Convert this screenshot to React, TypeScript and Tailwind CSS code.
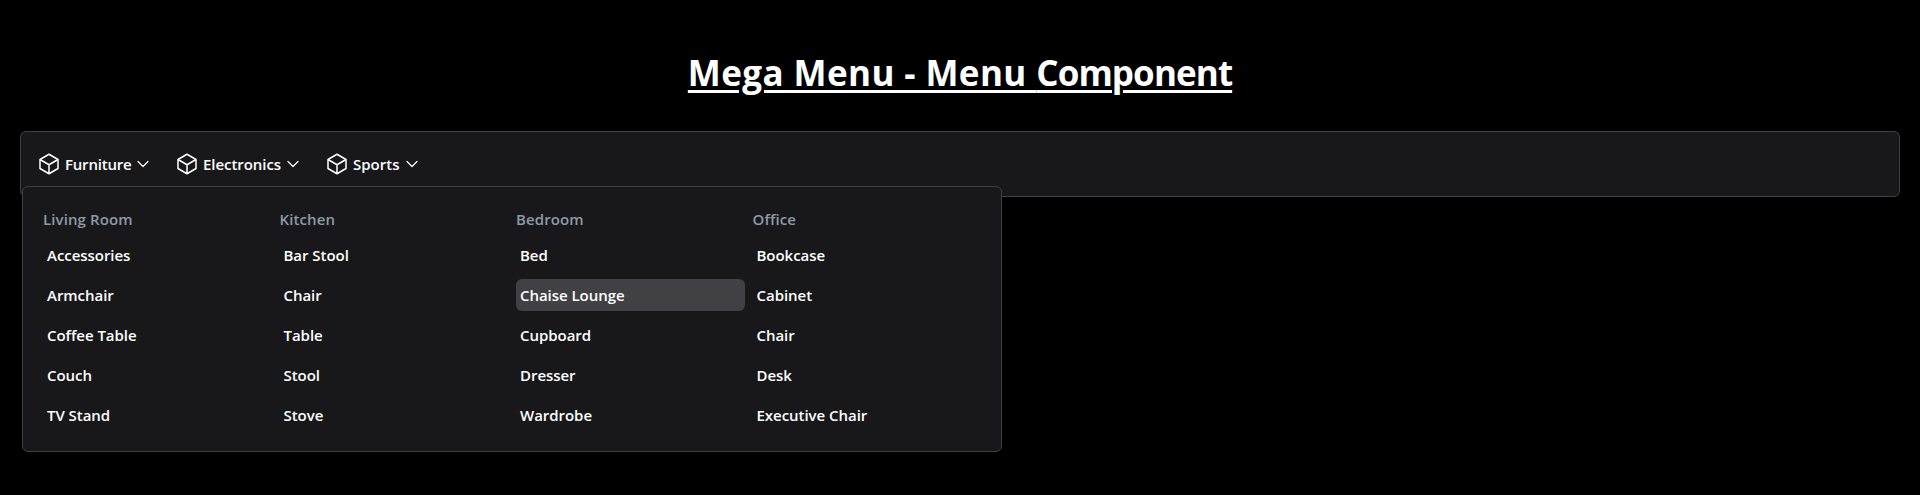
import React from "react";

type Column = { title: string; items: string[] };

const columns: Column[] = [
  { title: "Living Room", items: ["Accessories", "Armchair", "Coffee Table", "Couch", "TV Stand"] },
  { title: "Kitchen", items: ["Bar Stool", "Chair", "Table", "Stool", "Stove"] },
  { title: "Bedroom", items: ["Bed", "Chaise Lounge", "Cupboard", "Dresser", "Wardrobe"] },
  { title: "Office", items: ["Bookcase", "Cabinet", "Chair", "Desk", "Executive Chair"] },
];

const tabs = [
  { label: "Furniture", width: "w-[66px] tracking-[-0.2px]" },
  { label: "Electronics", width: "w-[78px] tracking-[-0.06px]" },
  { label: "Sports", width: "w-[47px]" },
];

const activeItem = "Chaise Lounge";

function CubeIcon() {
  return (
    <svg className="size-6 shrink-0" viewBox="0 0 24 24" fill="none" stroke="currentColor" strokeWidth="1.5" strokeLinecap="round" strokeLinejoin="round">
      <path d="m21 7.5-9-5.25L3 7.5m18 0-9 5.25m9-5.25v9l-9 5.25M3 7.5l9 5.25M3 7.5v9l9 5.25m0-9v9" />
    </svg>
  );
}

function ChevronIcon() {
  return (
    <svg className="size-4 shrink-0" viewBox="0 0 24 24" fill="none" stroke="currentColor" strokeWidth="1.8" strokeLinecap="round" strokeLinejoin="round">
      <path d="m19.5 8.25-7.5 7.5-7.5-7.5" />
    </svg>
  );
}

export default function App() {
  return (
    <div className="h-[495px] overflow-hidden bg-black px-5 pt-[50px] font-['Open_Sans','Noto_Sans',sans-serif] text-[15px] font-semibold text-white">
      <h1 className="h-[81px] text-center text-[35px] leading-[46px] font-bold underline decoration-[3px] underline-offset-[4px]">
        <span className="tracking-[0.4px]">Mega Menu - Menu </span>
        <span className="tracking-[-0.9px]">Component</span>
      </h1>
      <nav className="relative flex h-[66px] items-center gap-6 rounded-md border border-[#3f3f44] bg-[#18181a] px-4">
        {tabs.map((tab) => (
          <button key={tab.label} className="flex items-center gap-1">
            <CubeIcon />
            <span className={`${tab.width} text-left leading-6 whitespace-nowrap`}>{tab.label}</span>
            <ChevronIcon />
          </button>
        ))}
        <div className="absolute top-[54px] left-px grid h-[266px] w-[980px] grid-cols-4 gap-x-2 rounded-md border border-[#3f3f44] bg-[#18181a] px-5 pt-5">
          {columns.map((column) => (
            <section key={column.title}>
              <h2 className="mb-2 leading-6 tracking-[0.1px] text-[#8e9aa8]">{column.title}</h2>
              <ul className="flex flex-col gap-2">
                {column.items.map((item) => (
                  <li
                    key={item}
                    className={`h-8 rounded-md px-1 leading-8 tracking-[-0.04px] whitespace-nowrap ${item === activeItem ? "bg-[#404045]" : ""}`}
                  >
                    {item}
                  </li>
                ))}
              </ul>
            </section>
          ))}
        </div>
      </nav>
    </div>
  );
}
